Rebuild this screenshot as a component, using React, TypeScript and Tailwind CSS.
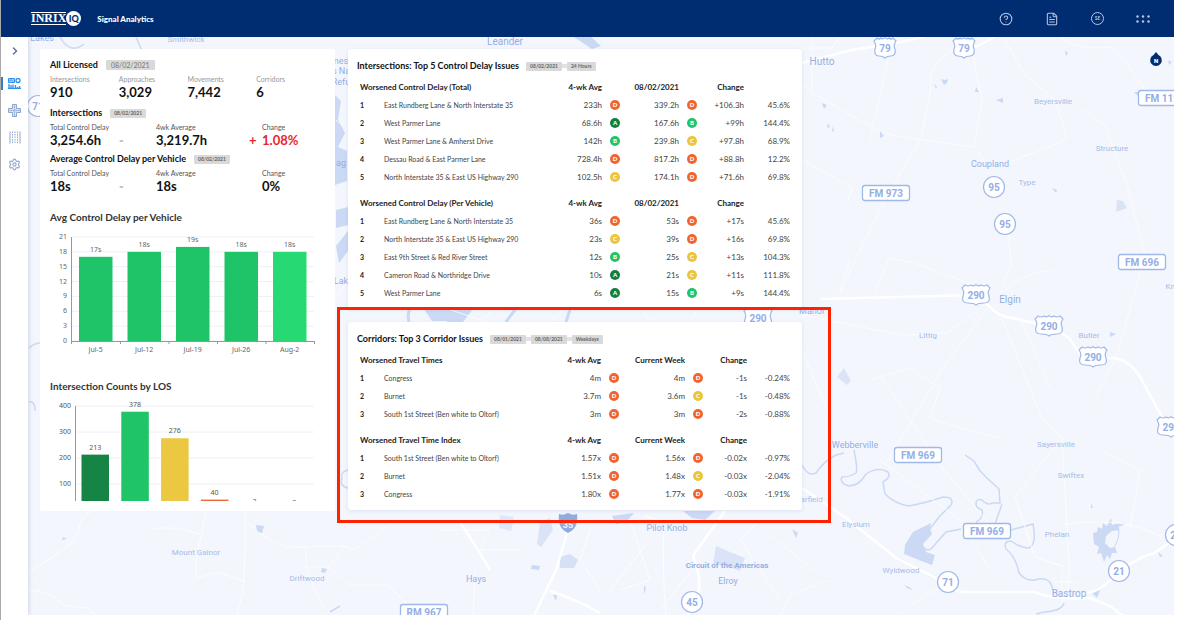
import type { ReactNode } from "react";
import { ChevronRight, CircleHelp, FileText, Settings } from "lucide-react";

type Grade = "A" | "B" | "C" | "D";

interface Row {
  name: string;
  avg: string;
  avgGrade: Grade;
  now: string;
  nowGrade: Grade;
  change: string;
  pct: string;
}

const GRADE_BG: Record<Grade, string> = {
  A: "bg-[#128040]",
  B: "bg-[#1fc566]",
  C: "bg-[#ecc53e]",
  D: "bg-[#f0652f]",
};

const TOTAL_DELAY: Row[] = [
  { name: "East Rundberg Lane & North Interstate 35",   avg: "233h",   avgGrade: "D", now: "339.2h", nowGrade: "D", change: "+106.3h", pct: "45.6%" },
  { name: "West Parmer Lane",                           avg: "68.6h",  avgGrade: "A", now: "167.6h", nowGrade: "B", change: "+99h",    pct: "144.4%" },
  { name: "West Parmer Lane & Amherst Drive",           avg: "142h",   avgGrade: "B", now: "239.8h", nowGrade: "C", change: "+97.8h",  pct: "68.9%" },
  { name: "Dessau Road & East Parmer Lane",             avg: "728.4h", avgGrade: "D", now: "817.2h", nowGrade: "D", change: "+88.8h",  pct: "12.2%" },
  { name: "North Interstate 35 & East US Highway 290",  avg: "102.5h", avgGrade: "C", now: "174.1h", nowGrade: "D", change: "+71.6h",  pct: "69.8%" },
];

const VEHICLE_DELAY: Row[] = [
  { name: "East Rundberg Lane & North Interstate 35",   avg: "36s", avgGrade: "D", now: "53s", nowGrade: "D", change: "+17s", pct: "45.6%" },
  { name: "North Interstate 35 & East US Highway 290",  avg: "23s", avgGrade: "C", now: "39s", nowGrade: "D", change: "+16s", pct: "69.8%" },
  { name: "East 9th Street & Red River Street",         avg: "12s", avgGrade: "B", now: "25s", nowGrade: "C", change: "+13s", pct: "104.3%" },
  { name: "Cameron Road & Northridge Drive",            avg: "10s", avgGrade: "A", now: "21s", nowGrade: "C", change: "+11s", pct: "111.8%" },
  { name: "West Parmer Lane",                           avg: "6s",  avgGrade: "A", now: "15s", nowGrade: "B", change: "+9s",  pct: "144.4%" },
];

const TRAVEL_TIMES: Row[] = [
  { name: "Congress",                            avg: "4m",   avgGrade: "D", now: "4m",   nowGrade: "D", change: "-1s", pct: "-0.24%" },
  { name: "Burnet",                              avg: "3.7m", avgGrade: "D", now: "3.6m", nowGrade: "C", change: "-1s", pct: "-0.48%" },
  { name: "South 1st Street (Ben white to Oltorf)", avg: "3m", avgGrade: "D", now: "3m",  nowGrade: "D", change: "-2s", pct: "-0.88%" },
];

const TRAVEL_INDEX: Row[] = [
  { name: "South 1st Street (Ben white to Oltorf)", avg: "1.57x", avgGrade: "D", now: "1.56x", nowGrade: "D", change: "-0.02x", pct: "-0.97%" },
  { name: "Burnet",                              avg: "1.51x", avgGrade: "D", now: "1.48x", nowGrade: "C", change: "-0.03x", pct: "-2.04%" },
  { name: "Congress",                            avg: "1.80x", avgGrade: "D", now: "1.77x", nowGrade: "D", change: "-0.03x", pct: "-1.91%" },
];

const COUNTS = [
  { label: "Intersections", value: "910" },
  { label: "Approaches", value: "3,029" },
  { label: "Movements", value: "7,442" },
  { label: "Corridors", value: "6" },
];

const DELAY_BARS = [
  { label: "Jul-5",  value: 17, fill: "#1fc468" },
  { label: "Jul-12", value: 18, fill: "#1fc468" },
  { label: "Jul-19", value: 19, fill: "#1fc468" },
  { label: "Jul-26", value: 18, fill: "#1fc468" },
  { label: "Aug-2",  value: 18, fill: "#26d972" },
];

const LOS_BARS = [
  { value: 213, fill: "#168445" },
  { value: 378, fill: "#1fc468" },
  { value: 276, fill: "#ecc742" },
  { value: 40,  fill: "#f0653a" },
  { value: 3,   fill: "#d93a2b" },
  { value: 0,   fill: "#a82020" },
];

/* ---------- Map ---------- */

const PLACES = [
  { x: 42,   y: 41,  t: "Lakes", s: 9 },
  { x: 186,  y: 42,  t: "Smithwick", s: 8 },
  { x: 505,  y: 45,  t: "Leander", s: 10 },
  { x: 822,  y: 65,  t: "Hutto", s: 10 },
  { x: 1053, y: 104, t: "Beyersville", s: 8 },
  { x: 1112, y: 151, t: "Structure", s: 8 },
  { x: 990,  y: 167, t: "Coupland", s: 9 },
  { x: 1027, y: 185, t: "Type", s: 8 },
  { x: 1010, y: 303, t: "Elgin", s: 10 },
  { x: 1089, y: 338, t: "Butler", s: 8 },
  { x: 928,  y: 338, t: "Littig", s: 8 },
  { x: 1179, y: 289, t: "Knobbs", s: 8 },
  { x: 812,  y: 314, t: "Manor", s: 9 },
  { x: 855,  y: 448, t: "Webberville", s: 9 },
  { x: 1056, y: 447, t: "Sayersville", s: 8 },
  { x: 1071, y: 478, t: "Swiftex", s: 8 },
  { x: 809,  y: 502, t: "Garfield", s: 8 },
  { x: 856,  y: 527, t: "Elysium", s: 8 },
  { x: 1057, y: 537, t: "Phelan", s: 8 },
  { x: 901,  y: 573, t: "Wyldwood", s: 8 },
  { x: 1069, y: 597, t: "Bastrop", s: 10 },
  { x: 667,  y: 531, t: "Pilot Knob", s: 9 },
  { x: 727,  y: 568, t: "Circuit of the Americas", s: 8, b: true },
  { x: 728,  y: 584, t: "Elroy", s: 9 },
  { x: 476,  y: 582, t: "Hays", s: 9 },
  { x: 196,  y: 555, t: "Mount Gainor", s: 8 },
  { x: 307,  y: 581, t: "Driftwood", s: 8 },
  { x: 341,  y: 64,  t: "nes", s: 9 },
  { x: 341,  y: 74,  t: "s Na", s: 9 },
  { x: 341,  y: 85,  t: "Refu", s: 9 },
  { x: 341,  y: 166, t: "ag", s: 9 },
  { x: 341,  y: 284, t: "Lak", s: 9 },
];

const SHIELDS = [
  { x: 885,  y: 48,  t: "79" },
  { x: 964,  y: 48,  t: "79" },
  { x: 976,  y: 295, t: "290" },
  { x: 1049, y: 326, t: "290" },
  { x: 1093, y: 357, t: "290" },
  { x: 1171, y: 427, t: "290" },
  { x: 758,  y: 318, t: "290" },
];

const CIRCLES = [
  { x: 994,  y: 187, t: "95" },
  { x: 1005, y: 224, t: "95" },
  { x: 948,  y: 582, t: "71" },
  { x: 1119, y: 571, t: "21" },
  { x: 1176, y: 535, t: "21" },
  { x: 692,  y: 602, t: "45" },
  { x: 38,   y: 106, t: "71" },
];

const FARM_ROADS = [
  { x: 1162, y: 98,  t: "FM 112" },
  { x: 886,  y: 193, t: "FM 973" },
  { x: 1142, y: 262, t: "FM 696" },
  { x: 918,  y: 455, t: "FM 969" },
  { x: 987,  y: 531, t: "FM 969" },
  { x: 424,  y: 612, t: "RM 967" },
];

function Shield({ x, y, t }: { x: number; y: number; t: string }) {
  return (
    <g transform={`translate(${x} ${y})`}>
      {t.length > 2 ? (
        <path
          d="M-11 -10 q3 2 6 0 q3 2 5 -0.500 q2 2.500 5 0.500 q3 2 6 0 l3 3 q-3 4 -1 8 q2 7 -5 7 q-6 0 -8 2 q-2 -2 -8 -2 q-7 0 -5 -7 q2 -4 -1 -8 z"
          fill="#fff" stroke="#9fb8ea" strokeWidth={1.2}
        />
      ) : (
        <path
          d="M-8 -10 q2 2 4 0 q2 2 4 -0.500 q2 2.500 4 0.500 q2 2 4 0 l3 3 q-3 4 -1 8 q1 7 -4 7 q-4 0 -6 2 q-2 -2 -6 -2 q-5 0 -4 -7 q2 -4 -1 -8 z"
          fill="#fff" stroke="#9fb8ea" strokeWidth={1.2}
        />
      )}
      <text y={4} textAnchor="middle" fontSize={10} fontWeight={700}>{t}</text>
    </g>
  );
}

function MapCanvas() {
  return (
    <svg className="absolute inset-0 h-full w-full" aria-hidden="true" fontFamily="Roboto, sans-serif" fill="#94aee6">
      <rect width="100%" height="100%" fill="#f3f6fc" />
      {/* map drawing uses window coordinates, the canvas starts under the header */}
      <g transform="translate(-1 -37)">
        {/* lakes and reservoirs */}
        <g fill="#cbd9f4">
          <path d="M905 545 l8 -13 l8 -4 l10 -5 l-1 6 l2 5 l-9 10 l3 8 l9 3 l-3 10 l-8 -3 l-20 -8 z" />
          <path d="M1093 533 l4 -1 l1 -5 l4 2 l1 -6 l4 3 l4 -8 l1 7 l7 -2 l7 1 l-8 3 l2 3 l-8 1 l-6 5 l-1 7 l5 5 l5 -1 l2 6 l-5 0 l-2 6 l-3 -4 l-3 7 l-3 -9 l-4 1 l2 -7 l-5 -3 z" />
          <path d="M1118 527 q3 10 -5 22" fill="none" stroke="#cbd9f4" />
          <path d="M716 546 l14 6 l15 6 l-5 13 l-14 -5 l-13 -2 z" opacity=".6" />
          <path d="M560 557 l10 -3 l8 6 l-4 8 l-14 0 z" opacity=".7" />
          <path d="M540 522 l10 -4 l3 12 l-12 17 l-4 -3 z" opacity=".6" />
          <path d="M500 515 l14 2 l-3 14 l-12 -3 z" opacity=".5" />
          <path d="M683 511 l32 0 l-10 9 l-13 -2 z M612 516 l22 -3 l-8 9 l-10 2z" />
          <path d="M1117 200 l6 1 l4 7 l-11 4 z" opacity=".6" />
          <path d="M837 377 l7 -9 l7 13 l-4 4 z" opacity=".6" />
          <path d="M941 79 l4 1 l3 -1 l-1 4 l-3 2 z M934 84 l3 3 l-1 2z M976 87 l3 5 l-4 0z M996 100 l7 -2 l0 5z M1065 50 l3 3 l-2 3z M880 131 l4 5 l-4 2z M822 103 l5 2 l-3 4z M828 123 l2 4 l-3 1z M833 126 l1 6 l-2 -1z M1052 188 l5 2 l-1 3z M1168 60 l4 2 l-3 3z M1134 92h6l-2 4z M1091 503l2 5h-2z M1158 552l5 4l-3 1z" />
          <path d="M335 95 l6 6 l-3 18 l7 14 l-7 14 l9 4 v30 l-12 4 z M336 210 l12 -3 v18 l-12 3 z M336 246 l12 -15 v20 l-9 12 z" />
          <path d="M574 37 l17 0 l10 9 l-9 3 z M420 303 l20 0 l12 18 l-20 0z M444 310 l28 0 l-9 12 l-16 0z" />
          <path d="M256 525 l8 1 l-2 7 l-5 -1 z M322 568 l5 1 l-2 4 l-4 -1z M63 537 l4 2 l-5 1z M532 565 l8 1 l-1 4 l-8 -1z M792 529 l6 4 l-2 5z M904 585 l7 3 l1 2 l-5 -2z M1092 593 l8 -3 l-3 8z M644 586l2 1l-2 8z M553 595l4 0l-1 6z" />
          <path d="M1110 332 l6 2 l-6 3 z" />
        </g>
        {/* rivers */}
        <g fill="none" stroke="#cbd9f4" strokeWidth={1.500}>
          <path d="M802 465 q6 12 14 8 q8 -12 20 -18 l8 -2 M854 450 q4 20 2 23 q-6 4 -14 4 q-3 6 7 9 q10 0 17 -12 q12 -8 22 -2 q3 6 -5 10 l2 12 q10 10 24 12 q20 -4 34 -9 q12 0 8 8 l-12 12 l-20 26 q6 9 12 6 l15 -17 l15 -3" />
          <path d="M965 455 l9 6 l6 10 l8 8 l11 10 l1 14 h-8 q-4 3 -10 -3 q-6 -2 -6 4 q0 4 6 6 q2 8 -6 12 M1002 504 l-7 20 M1011 530 l22 -6 q4 20 -4 24 q-8 0 -18 -7 q-8 0 -5 8 q10 8 13 24 q8 10 20 6 q12 -2 14 12 M1064 603 q-2 8 -20 9 l-8 2" />
          <path d="M60 37 q10 18 24 7 M136 37 q5 12 10 22 M330 612 l10 -6 M29 348 q5 -5 12 -5 M29 402 q6 -2 6 9" />
          <path d="M414 303 q-8 8 -5 19 M520 303 l-14 19 M572 303 l-6 19" strokeWidth={3} />
          <path d="M348 470 q-8 2 -6 8 q-3 8 6 10" />
        </g>
        {/* minor roads */}
        <g fill="none" stroke="#fff" strokeWidth={1} opacity=".8">
          <path d="M29 572 l28 -18 q20 -14 22 -24 q0 -12 14 -20 M29 590 q20 0 36 16 l22 2 l10 8 M150 530 q20 -6 50 4 M206 511 l-10 50 v17 l22 -6 l28 10 M245 511 v40 l-2 40 l-6 25 M248 523 q20 20 40 24 l57 -1 l10 4 M288 548 l18 -1 v22 M306 567 h22 l22 18 h38 l20 20 M306 569 l18 40 M345 546 l-17 22 M355 550 l40 -30 M475 572 l-2 45" />
          <path d="M888 60 l-18 80 M1005 40 l20 35 l30 25 l12 38 l-8 5 l-52 20 M955 48 q-30 20 -24 40 l-10 50 l-35 60 l-30 60 l-18 40 M972 50 l10 50 l-8 46 l15 22 M802 85 q60 40 90 50 l80 12 M1060 37 q20 15 50 10 l20 20 l16 25 M1075 105 l30 20 l22 60 l18 70 l-28 100 l-25 50 M802 160 l50 28 l-4 12" />
          <path d="M875 293 l14 -35 l25 5 l60 22 M840 290 l10 -30 M802 315 l100 20 l45 -2 l40 -30 M990 305 l-45 60 l-30 50 l-30 50 M1002 318 l40 100 l20 20 l8 140 M1020 318 l30 70 M870 380 l40 -12 l30 20 l-10 30 l30 10 l40 10 M1100 450 l40 20 l-10 60 M1055 447 l-40 50 l20 60 l30 10 M1062 525 q60 -10 100 12 M880 375 l60 90 l50 60 M1007 210 l4 55 l-12 30 M1003 292 q20 -20 50 -22 M880 460 l80 60 l30 50 M895 620 q30 -30 50 -32 M1062 572 v30 M1068 572 v25 M1055 582 h22" />
          <path d="M440 530 h50 l-10 20 h40 M590 530 l-10 30 l20 30 M630 520 l20 60 l-30 10 M664 520 q-2 50 2 96 M610 590 l40 -50 M700 560 l-40 50 M760 520 l-20 20 l40 60 M770 535 l50 40 M645 516 l30 10 M830 580 l-40 15 l-10 20" />
          <path d="M802 48 h30 l8 -11 M812 37 v60 M430 303 l60 20 M500 303 l-20 20 M570 303 l-20 20 M640 305 l10 17 M700 303 l-10 20 M802 350 l25 60 M335 300 l13 -20 M336 120 l12 10" />
        </g>
        {/* highways */}
        <g fill="none" stroke="#fff" strokeWidth={2.500}>
          <path d="M802 63 l50 -13 l33 -5 l40 -8 M975 47 l20 -10 M820 299 l156 -4 l12 10 q10 12 24 13 l37 8 l20 12 l14 20 h30 q20 2 32 28 l22 40" />
          <path d="M802 488 l44 30 l50 40 l40 20 q10 12 28 14 h70 q20 8 56 6 l20 8 l18 14 M1080 594 q20 0 39 -23 q20 -14 35 -18 l24 -16" />
          <path d="M568 530 l-12 40 l-22 46 M550 591 q30 10 50 22 M725 511 l-18 25 l-14 20 q8 20 6 34 l-12 28 M460 522 l18 28 l12 20" />
        </g>
        <path d="M559 514 q4 2 9 -1 q5 3 9 1 q2 14 -9 19 q-11 -5 -9 -19 z" fill="#8fabdf" />
        <text x={568} y={528} textAnchor="middle" fontSize={9} fontWeight={700} fill="#f3f6fc">35</text>

        {PLACES.map(p => (
          <text key={p.t} x={p.x} y={p.y} textAnchor="middle" fontSize={p.s} fontWeight={p.b ? 700 : 400} opacity={p.s > 8 || p.b ? 1 : 0.8}>{p.t}</text>
        ))}
        {SHIELDS.map(s => <Shield key={`${s.x}-${s.y}`} {...s} />)}
        {CIRCLES.map(c => (
          <g key={`${c.x}-${c.y}`}>
            <circle cx={c.x} cy={c.y} r={10.5} fill="#fff" stroke="#9fb8ea" strokeWidth={1.2} />
            <text x={c.x} y={c.y + 4} textAnchor="middle" fontSize={10} fontWeight={700}>{c.t}</text>
          </g>
        ))}
        {FARM_ROADS.map(f => (
          <g key={`${f.x}-${f.y}`}>
            <rect x={f.x - 23.5} y={f.y - 7.5} width={47} height={15} rx={2.5} fill="#fff" stroke="#9fb8ea" strokeWidth={1.3} />
            <text x={f.x} y={f.y + 4} textAnchor="middle" fontSize={10} fontWeight={700}>{f.t}</text>
          </g>
        ))}

        {/* compass */}
        <path d="M1156 52 l2.500 3 a5.800 5.800 0 1 1 -5 0 z" fill="#052c70" />
        <text x={1156} y={63} textAnchor="middle" fontSize={6} fontWeight={900} fill="#fff">N</text>
      </g>
    </svg>
  );
}

/* ---------- Header and sidebar ---------- */

function Header() {
  return (
    <header className="flex h-[37px] items-center bg-[#002d72] pl-[30px] pr-6 text-white">
      <a href="#" className="flex items-center" aria-label="INRIX IQ">
        <span className="border-y border-white font-['Liberation_Serif',serif] text-[12px] leading-[11px] font-bold">INRIX</span>
        <span className="flex size-[15px] items-center justify-center rounded-full bg-white text-[9px] leading-none font-black text-[#002d72]">IQ</span>
      </a>
      <h1 className="ml-4 text-[8px] font-black">Signal Analytics</h1>
      <nav className="ml-auto flex items-center gap-8 text-[#b9c6df]">
        <button aria-label="Help"><CircleHelp size={14} strokeWidth={1.8} /></button>
        <button aria-label="Report"><FileText size={14} strokeWidth={1.8} /></button>
        <button aria-label="Account" className="flex size-[13px] items-center justify-center rounded-full border border-[#b9c6df] text-[5px] font-bold">SE</button>
        <button aria-label="Apps">
          <svg width="14" height="8" fill="currentColor">
            <circle cx="1.500" cy="1.500" r="1.200" /><circle cx="7" cy="1.500" r="1.200" /><circle cx="12.500" cy="1.500" r="1.200" />
            <circle cx="1.500" cy="6.500" r="1.200" /><circle cx="7" cy="6.500" r="1.200" /><circle cx="12.500" cy="6.500" r="1.200" />
          </svg>
        </button>
      </nav>
    </header>
  );
}

function NavButton({ label, active, children }: { label: string; active?: boolean; children: ReactNode }) {
  return (
    <button
      aria-label={label}
      className={`flex h-[27px] w-full items-center justify-center ${active ? "text-[#2f8fee]" : "text-[#8fa6cf]"}`}
    >
      {active && <span className="mr-auto h-[13px] w-[2px] bg-[#3a7cc0]" />}
      {children}
      {active && <span className="ml-auto w-[2px]" />}
    </button>
  );
}

function Sidebar() {
  return (
    <aside className="relative flex w-[27px] flex-col bg-white shadow-[1px_0_4px_rgba(60,80,140,0.2)]">
      <button aria-label="Expand menu" className="mb-[6px] flex h-[27px] items-center justify-center text-[#5f7396]">
        <ChevronRight size={12} strokeWidth={3} />
      </button>
      <NavButton label="Dashboard" active>
        <svg width="13" height="11" fill="none" stroke="currentColor">
          <path d="M.500 .500h6v4h-6z" fill="currentColor" fillOpacity=".4" />
          <path d="M1 3.500l2-2 2 2" />
          <circle cx="10" cy="2.500" r="2" strokeWidth="1.300" />
          <path d="M1 6v4 M3 7v3 M5 6.500v3.500 M0 10.500h13 M7.500 7v3 M9.500 9v1 M11.500 8v2" strokeWidth="1.300" />
        </svg>
      </NavButton>
      <NavButton label="Intersections">
        <svg width="13" height="13" fill="none" stroke="currentColor">
          <path d="M4.500 .500h4v4h4v4h-4v4h-4v-4h-4v-4h4z" fill="currentColor" fillOpacity=".35" />
          <path d="M6.500 0v13M0 6.500h13" strokeDasharray="1.500 1" />
        </svg>
      </NavButton>
      <NavButton label="Corridors">
        <svg width="12" height="13" fill="none" stroke="currentColor">
          <path d="M1 .500v12M11 .500v12" />
          <path d="M3.500 .500v12M6 .500v12M8.500 .500v12" strokeDasharray="1.500 1" />
        </svg>
      </NavButton>
      <NavButton label="Settings"><Settings size={13} strokeWidth={2} /></NavButton>
    </aside>
  );
}

/* ---------- Left card ---------- */

function Tag({ children }: { children: ReactNode }) {
  return <span className="flex h-[9px] items-center rounded-[1px] bg-[#d9d9d9] px-1 text-[5px] leading-none font-bold text-[#666]">{children}</span>;
}

function DelaySummary({ total, average, change, sign }: { total: string; average: string; change: string; sign?: string }) {
  return (
    <dl className="grid grid-cols-[69px_37px_93px_13px_1fr] grid-rows-[12px_14px] items-center leading-none">
      <dt className="text-[7px] text-[#555]">Total Control Delay</dt>
      <dd className="col-start-1 row-start-2 text-[13px] font-bold">{total}</dd>
      <dd className="col-start-2 row-start-2 text-[8px] text-[#999]" aria-hidden="true">=</dd>
      <dt className="col-start-3 row-start-1 text-[7px] text-[#555]">4wk Average</dt>
      <dd className="col-start-3 row-start-2 text-[13px] font-bold">{average}</dd>
      <dt className="col-start-5 row-start-1 text-[7px] text-[#555]">Change</dt>
      <dd className="col-start-4 row-start-2 text-[13px] font-bold text-[#e8262d]">{sign}</dd>
      <dd className={`col-start-5 row-start-2 text-[13px] font-bold ${sign ? "text-[#e8262d]" : ""}`}>{change}</dd>
    </dl>
  );
}

function DelayChart() {
  const zero = 116;
  const unit = 104 / 21;
  return (
    <svg className="block w-full" height="153" fontFamily="Noto Sans, sans-serif" fontSize={7} fill="#666" role="img" aria-label="Avg Control Delay per Vehicle">
      {[0, 3, 6, 9, 12, 15, 18, 21].map(v => (
        <g key={v}>
          <path d={`M22 ${zero - v * unit}h242`} stroke="#edf0f8" />
          <text x={17} y={zero - v * unit + 2} textAnchor="end">{v}</text>
        </g>
      ))}
      {DELAY_BARS.map((b, i) => (
        <g key={b.label}>
          <rect x={29 + i * 48.5} y={zero - b.value * unit} width={33.5} height={b.value * unit} fill={b.fill} />
          <text x={45.7 + i * 48.5} y={zero - b.value * unit - 5} textAnchor="middle">{b.value}s</text>
          <text x={45.7 + i * 48.5} y={127} textAnchor="middle">{b.label}</text>
        </g>
      ))}
      <path d="M21.500 12v107M21 116.500h243.500M70.500 116v3M119 116v3M167.500 116v3M216 116v3M264.500 116v3" stroke="#999" fill="none" />
    </svg>
  );
}

function LosChart() {
  const zero = 116;
  const unit = 0.26;
  return (
    <svg className="block w-full" height="107" fontFamily="Noto Sans, sans-serif" fontSize={7} fill="#555" role="img" aria-label="Intersection Counts by LOS">
      {[100, 200, 300, 400].map(v => (
        <g key={v}>
          <path d={`M25 ${zero - v * unit}h239`} stroke="#edf0f8" />
          <text x={21} y={zero - v * unit + 2} textAnchor="end">{v}</text>
        </g>
      ))}
      {LOS_BARS.map((b, i) => (
        <g key={b.value}>
          <rect x={31.5 + i * 39.8} y={zero - b.value * unit} width={27.5} height={b.value * unit} fill={b.fill} />
          <text x={45.2 + i * 39.8} y={zero - b.value * unit - 5} textAnchor="middle">{b.value}</text>
        </g>
      ))}
      <path d="M25.500 12v95" stroke="#999" />
    </svg>
  );
}

function LicensedCard() {
  return (
    <section className="w-[295px] shrink-0 rounded-[3px] bg-white px-[10px] pt-2 pb-[10px] text-[#111]">
      <div className="flex h-4 items-center gap-2">
        <h2 className="text-[9px] font-bold">All Licensed</h2>
        <span className="flex h-[10px] items-center rounded-[1px] bg-[#d9d9d9] px-[5px] text-[7px] leading-none text-[#777]">08/02/2021</span>
      </div>
      <dl className="mb-[6px] grid grid-cols-4 leading-none">
        {COUNTS.map(c => (
          <div key={c.label}>
            <dt className="flex h-3 items-center text-[7px] text-[#999]">{c.label}</dt>
            <dd className="flex h-[14px] items-center text-[13px] font-bold">{c.value}</dd>
          </div>
        ))}
      </dl>
      <div className="flex h-4 items-center gap-2">
        <h2 className="text-[9px] font-bold">Intersections</h2>
        <Tag>08/02/2021</Tag>
      </div>
      <DelaySummary total="3,254.6h" average="3,219.7h" change="1.08%" sign="+" />
      <div className="mt-1 flex h-4 items-center gap-2">
        <h2 className="text-[9px] font-bold">Average Control Delay per Vehicle</h2>
        <Tag>08/02/2021</Tag>
      </div>
      <DelaySummary total="18s" average="18s" change="0%" />
      <h2 className="mt-4 flex h-4 items-center text-[10px] font-bold text-[#333]">Avg Control Delay per Vehicle</h2>
      <DelayChart />
      <h2 className="flex h-4 items-center text-[10px] font-bold text-[#333]">Intersection Counts by LOS</h2>
      <LosChart />
    </section>
  );
}

/* ---------- Issue cards ---------- */

function GradeDot({ grade }: { grade: Grade }) {
  return (
    <span className={`mx-auto flex size-[10px] items-center justify-center rounded-full text-[6px] leading-none font-black text-white ${GRADE_BG[grade]}`}>
      {grade}
    </span>
  );
}

function IssueTable({ title, current, rows, weekly }: { title: string; current: string; rows: Row[]; weekly?: boolean }) {
  return (
    <table className="w-full table-fixed text-right text-[7px] leading-none text-[#444]">
      <colgroup>
        <col className="w-6" />
        <col />
        <col className="w-[60px]" />
        <col className="w-[26px]" />
        <col className={weekly ? "w-[58px]" : "w-[51px]"} />
        <col className="w-[26px]" />
        <col className={weekly ? "w-[36px]" : "w-[39px]"} />
        <col className={weekly ? "w-[43px]" : "w-[46px]"} />
      </colgroup>
      <thead className="text-[8px] whitespace-nowrap text-[#222]">
        <tr className="h-[18px]">
          <th colSpan={2} className="text-left">{title}</th>
          <th>4-wk Avg</th>
          <td />
          <th>{current}</th>
          <td />
          <th>Change</th>
          <td />
        </tr>
      </thead>
      <tbody>
        {rows.map((r, i) => (
          <tr key={r.name} className="h-[18px]">
            <th className="text-left text-[#222]">{i + 1}</th>
            <td className="text-left whitespace-nowrap">{r.name}</td>
            <td className="text-[8px]">{r.avg}</td>
            <td><GradeDot grade={r.avgGrade} /></td>
            <td className="text-[8px]">{r.now}</td>
            <td><GradeDot grade={r.nowGrade} /></td>
            <td className="text-[8px]">{r.change}</td>
            <td className="text-[8px]">{r.pct}</td>
          </tr>
        ))}
      </tbody>
    </table>
  );
}

function IssueCard({ title, tags, children }: { title: string; tags: string[]; children: ReactNode }) {
  return (
    <section className="rounded-[3px] bg-white px-3 pt-2 pb-[7px] shadow-[0_1px_4px_rgba(60,80,140,0.12)]">
      <div className="-ml-[3px] mb-[3px] flex h-[18px] items-center">
        <h2 className="mr-[7px] text-[9px] font-bold text-[#111]">{title}</h2>
        {tags.map((t, i) => (
          <div key={t} className="flex items-center">
            {i > 0 && <span className="h-1 w-[5px] bg-[#e2e2e2]" />}
            <Tag>{t}</Tag>
          </div>
        ))}
      </div>
      <div className="flex flex-col gap-2">{children}</div>
    </section>
  );
}

export default function App() {
  return (
    <div className="flex min-h-screen flex-col border-l border-[#aaa] bg-white pr-[5px] pb-[5px] font-[Lato,sans-serif]">
      <Header />
      <div className="relative flex flex-1 overflow-hidden">
        <MapCanvas />
        <Sidebar />
        <main className="relative flex flex-1 items-start gap-[13px] p-3">
          <LicensedCard />
          <div className="flex w-[454px] shrink-0 flex-col gap-[13px]">
            <IssueCard title="Intersections: Top 5 Control Delay Issues" tags={["08/02/2021", "24 Hours"]}>
              <IssueTable title="Worsened Control Delay (Total)" current="08/02/2021" rows={TOTAL_DELAY} />
              <IssueTable title="Worsened Control Delay (Per Vehicle)" current="08/02/2021" rows={VEHICLE_DELAY} />
            </IssueCard>
            <div className="relative">
              <IssueCard title="Corridors: Top 3 Corridor Issues" tags={["08/01/2021", "08/08/2021", "Weekdays"]}>
                <IssueTable title="Worsened Travel Times" current="Current Week" rows={TRAVEL_TIMES} weekly />
                <IssueTable title="Worsened Travel Time Index" current="Current Week" rows={TRAVEL_INDEX} weekly />
              </IssueCard>
              {/* highlight frame */}
              <div className="pointer-events-none absolute -top-[15px] -right-[29px] -bottom-[13px] -left-[11px] border-[3px] border-[#ff2200]" />
            </div>
          </div>
        </main>
      </div>
    </div>
  );
}
